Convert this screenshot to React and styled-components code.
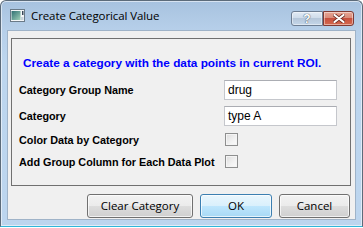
import React from "react";
import styled, { createGlobalStyle } from "styled-components";

const Global = createGlobalStyle`
  html, body { margin: 0; padding: 0; background: #ffffff; }
  body { font-family: "Liberation Sans", Arial, sans-serif; }
  * { box-sizing: border-box; }
`;

const Window = styled.div`
  width: 363px;
  height: 227px;
  border: 1px solid #5c6b7a;
  border-bottom: 1px solid #2fb6d9;
  border-radius: 6px 6px 0 0;
  background: linear-gradient(180deg, #a7c2df 0px, #b6cfe9 28px, #bdd6ee 60px, #bcd5ee 100%);
  box-shadow: inset 0 0 0 1px rgba(255, 255, 255, 0.55);
  display: flex;
  flex-direction: column;
  padding: 0 6px 6px 6px;
`;

const TitleBar = styled.div`
  height: 29px;
  display: flex;
  align-items: center;
  padding-left: 3px;
  gap: 6px;
`;

const AppIcon = styled.svg`
  width: 15px;
  height: 13px;
  flex: none;
  margin-top: 1px;
`;

const TitleText = styled.div`
  font-family: "Open Sans", "Liberation Sans", sans-serif;
  font-size: 11.5px;
  color: #000;
  flex: 1;
  letter-spacing: -0.1px;
`;

const CaptionButtons = styled.div`
  display: flex;
  align-self: flex-start;
  margin-top: 10px;
  margin-right: 2px;
`;

const CaptionButton = styled.div`
  width: ${(p) => p.$w}px;
  height: 15px;
  border: 1px solid ${(p) => (p.$close ? "#7f3a34" : "#6d7d92")};
  border-radius: ${(p) => p.$radius};
  background: ${(p) =>
    p.$close
      ? "linear-gradient(180deg, #e8a493 0%, #d98c7b 45%, #c7503e 50%, #d4694f 100%)"
      : "linear-gradient(180deg, #e2ebf5 0%, #cfdcea 45%, #b6c7da 50%, #c4d6e9 100%)"};
  box-shadow: inset 0 0 0 1px rgba(255, 255, 255, 0.45);
  display: flex;
  align-items: center;
  justify-content: center;
`;

const CloseIcon = styled.svg`
  width: 12px;
  height: 9px;
`;

const Glyph = styled.span`
  color: #fff;
  font-family: "Liberation Sans", sans-serif;
  font-size: 12px;
  font-weight: bold;
  line-height: 1;
  text-shadow: 0 0 1px #3f4e60, 0 0 1px #3f4e60;
`;

const Client = styled.div`
  height: 191px;
  background: #f0f0f0;
  border: 1px solid #9fb3c8;
  display: flex;
  flex-direction: column;
  padding: 7px 4px 0 3px;
`;

const GroupBox = styled.div`
  height: 148px;
  border: 1px solid #707070;
  padding: 16px 0 0 7px;
  display: flex;
  flex-direction: column;
`;

const Headline = styled.div`
  color: #0000ff;
  font-weight: bold;
  font-size: 11.8px;
  line-height: 16px;
  padding-left: 4px;
  margin-bottom: 9px;
  white-space: nowrap;
`;

const Row = styled.div`
  display: grid;
  grid-template-columns: 205px 113px;
  align-items: center;
  height: 20px;
  margin-top: ${(p) => p.$gap || 0}px;
`;

const Label = styled.div`
  font-weight: bold;
  font-size: 10.8px;
  color: #000;
  white-space: nowrap;
`;

const TextBox = styled.div`
  height: 20px;
  background: #fff;
  border: 1px solid #c5c7cc;
  border-top-color: #abadb3;
  font-size: 12px;
  padding: 0 3px;
  display: flex;
  align-items: center;
  color: #000;
`;

const Check = styled.div`
  width: 13px;
  height: 13px;
  margin-left: 1px;
  border: 1px solid #8e8f8f;
  background: linear-gradient(135deg, #dcdcdc 0%, #f2f2f2 60%, #fbfbfb 100%);
  box-shadow: inset 0 0 0 1px #f4f4f4;
`;

const Footer = styled.div`
  display: flex;
  justify-content: flex-end;
  gap: 7px;
  margin-top: 8px;
  padding-right: 1px;
`;

const Button = styled.div`
  width: ${(p) => p.$w}px;
  height: 24px;
  border: 1px solid ${(p) => (p.$default ? "#3c7fb1" : "#707070")};
  border-radius: 3px;
  background: ${(p) =>
    p.$default
      ? "linear-gradient(180deg, #eaf6fd 0%, #d9f0fc 50%, #bee6fd 51%, #a7d9f5 100%)"
      : "linear-gradient(180deg, #f2f2f2 0%, #ebebeb 50%, #dddddd 51%, #cfcfcf 100%)"};
  box-shadow: inset 0 0 0 1px rgba(255, 255, 255, 0.7);
  display: flex;
  align-items: center;
  justify-content: center;
  font-family: "Open Sans", "Liberation Sans", sans-serif;
  font-size: 11.5px;
  color: #000;
`;

export default function App() {
  return (
    <>
      <Global />
      <Window>
        <TitleBar>
          <AppIcon viewBox="0 0 15 13">
            <defs>
              <linearGradient id="ig" x1="0" y1="0" x2="1" y2="1">
                <stop offset="0" stopColor="#2f6f73" />
                <stop offset="1" stopColor="#9fd0b8" />
              </linearGradient>
            </defs>
            <rect x="0.5" y="0.5" width="14" height="12" fill="#f4f6f8" stroke="#6a7a88" />
            <rect x="1.5" y="2" width="9" height="9" fill="url(#ig)" />
            <rect x="12" y="2" width="1.5" height="4" fill="#3a4a5a" />
            <rect x="11" y="8" width="2.5" height="3" fill="#c9d3dc" />
          </AppIcon>
          <TitleText>Create Categorical Value</TitleText>
          <CaptionButtons>
            <CaptionButton $w={32} $radius="3px 0 0 3px">
              <Glyph>?</Glyph>
            </CaptionButton>
            <CaptionButton $w={31} $close $radius="0 3px 3px 0">
              <CloseIcon viewBox="0 0 12 9">
                <path d="M1.5 1 L10.5 8 M10.5 1 L1.5 8" stroke="#6b2a22" strokeWidth="3.6" strokeLinecap="round" />
                <path d="M1.5 1 L10.5 8 M10.5 1 L1.5 8" stroke="#ffffff" strokeWidth="2.2" strokeLinecap="round" />
              </CloseIcon>
            </CaptionButton>
          </CaptionButtons>
        </TitleBar>
        <Client>
          <GroupBox>
            <Headline>Create a category with the data points in current ROI.</Headline>
            <Row>
              <Label>Category Group Name</Label>
              <TextBox>drug</TextBox>
            </Row>
            <Row $gap={6}>
              <Label>Category</Label>
              <TextBox>type A</TextBox>
            </Row>
            <Row $gap={4}>
              <Label>Color Data by Category</Label>
              <Check />
            </Row>
            <Row $gap={2}>
              <Label>Add Group Column for Each Data Plot</Label>
              <Check />
            </Row>
          </GroupBox>
          <Footer>
            <Button $w={106}>Clear Category</Button>
            <Button $w={72} $default>OK</Button>
            <Button $w={71}>Cancel</Button>
          </Footer>
        </Client>
      </Window>
    </>
  );
}
